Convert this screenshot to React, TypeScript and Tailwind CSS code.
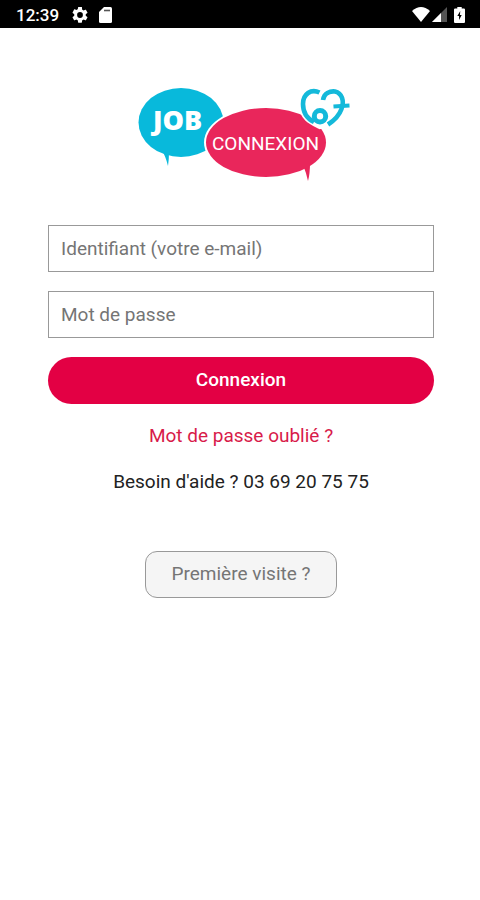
function StatusBar() {
  return (
    <header className="flex h-7 items-center justify-between bg-black pl-4 pr-[15px] text-white">
      <div className="flex items-center pt-[2px]">
        <span className="w-14 text-[17px] leading-7 font-medium">12:39</span>
        <svg viewBox="2 2 20 20" className="h-4 w-4" fill="currentColor" aria-hidden="true">
          <path d="M19.14 12.94c.04-.3.06-.61.06-.94 0-.32-.02-.64-.07-.94l2.03-1.58a.49.49 0 0 0 .12-.61l-1.92-3.32a.49.49 0 0 0-.59-.22l-2.39.96c-.5-.38-1.03-.7-1.62-.94l-.36-2.54A.48.48 0 0 0 13.92 2h-3.84a.47.47 0 0 0-.47.41l-.36 2.54c-.59.24-1.13.57-1.62.94l-2.39-.96a.47.47 0 0 0-.59.22L2.74 8.87a.47.47 0 0 0 .12.61l2.03 1.58c-.05.3-.09.63-.09.94s.02.64.07.94l-2.03 1.58a.49.49 0 0 0-.12.61l1.92 3.32c.12.22.37.29.59.22l2.39-.96c.5.38 1.03.7 1.62.94l.36 2.54c.05.24.24.41.48.41h3.84c.24 0 .44-.17.47-.41l.36-2.54c.59-.24 1.13-.56 1.62-.94l2.39.96c.22.08.47 0 .59-.22l1.92-3.32a.47.47 0 0 0-.12-.61zM12 15.6a3.6 3.6 0 1 1 0-7.2 3.6 3.6 0 0 1 0 7.2z" />
        </svg>
        <svg viewBox="0 0 13 16" className="ml-[11px] h-4 w-[13px]" aria-hidden="true">
          <path d="M5 0h6.500a1.500 1.500 0 0 1 1.500 1.500v13a1.500 1.500 0 0 1-1.500 1.500h-10A1.500 1.500 0 0 1 0 14.500V5z" fill="#fff" />
          <path d="M5 3.500h6" stroke="#555" strokeWidth="1.600" />
        </svg>
      </div>
      <div className="flex items-center pt-[1px]">
        <svg viewBox="0 0 18 15" className="h-[15px] w-[18px]" fill="#fff" aria-hidden="true">
          <path d="M0 4Q9-4 18 4L9 15z" />
        </svg>
        <svg viewBox="0 0 15 15" className="ml-[2px] h-[15px] w-[15px]" aria-hidden="true">
          <path d="M0 15 15 0v15z" fill="#555" />
          <path d="M0 15 9 6v9z" fill="#fff" />
        </svg>
        <svg viewBox="0 0 10 16" className="ml-[7px] h-4 w-[11px]" preserveAspectRatio="none" aria-hidden="true">
          <path d="M3 0h4v1.500h2a1 1 0 0 1 1 1V15a1 1 0 0 1-1 1H1a1 1 0 0 1-1-1V2.500a1 1 0 0 1 1-1h2z" fill="#fff" />
          <path d="M5.700 4 3 9h1.600v4L7 8H5.400z" fill="#000" />
        </svg>
      </div>
    </header>
  );
}

function Logo() {
  return (
    <svg viewBox="138 84 214 100" className="h-[100px] w-[214px]" role="img" aria-label="Job Connexion 67">
      <path d="M160 146Q166 157 168 166Q169 160 169 151z" fill="#08b9db" />
      <ellipse cx="181" cy="122.500" rx="42.500" ry="34.500" fill="#08b9db" />
      <ellipse cx="266" cy="142.500" rx="62" ry="36.500" fill="#fff" />
      <path d="M303 165Q306 172 308 181Q310 174 310 163z" fill="#e9265b" />
      <ellipse cx="266" cy="142.500" rx="60" ry="34.500" fill="#e9265b" />
      <path
        d="M323 94C313 86 302 94 302 105C302 118 312 122 320 126C337 122 346 113 346 101C344 89 331 88 323 94z"
        fill="#fff"
        stroke="#fff"
        strokeWidth="6"
      />
      <g fill="none" stroke="#14b9da" strokeWidth="4.600">
        <path d="M319.500 92.500C311 88.500 303 94 303 104C303 113 308 119 314 122" />
        <circle cx="320" cy="116.300" r="5.700" strokeWidth="5" />
        <path d="M323 100C324 93 330 91 335 91.500C342 93 344.500 101 341.500 109C339 116 335 120 328 124.500" />
        <path d="M333.500 106.500 349.500 105.500" strokeWidth="4" />
      </g>
      <text x="153" y="130" fill="#fff" fontSize="27" fontWeight="800" fontFamily="'Open Sans', sans-serif">
        JOB
      </text>
      <text x="212" y="150" fill="#fff" fontSize="19" fontFamily="Roboto, sans-serif">
        CONNEXION
      </text>
    </svg>
  );
}

function Field({ name, label, type }: { name: string; label: string; type: string }) {
  return (
    <input
      name={name}
      type={type}
      aria-label={label}
      placeholder={label}
      className="block h-[47px] w-full border border-[#999] bg-white px-3 text-[19px] text-[#333] outline-none placeholder:text-[#757575]"
    />
  );
}

export default function App() {
  return (
    <div className="min-h-screen bg-white font-['Roboto',sans-serif]">
      <StatusBar />
      <main className="flex flex-col pt-14 pr-[46px] pl-12">
        <div className="flex justify-center pl-2">
          <Logo />
        </div>
        <form className="mt-[41px] flex flex-col gap-[19px]" onSubmit={(e) => e.preventDefault()}>
          <Field name="email" label="Identifiant (votre e-mail)" type="email" />
          <Field name="password" label="Mot de passe" type="password" />
          <button type="submit" className="h-[47px] rounded-full bg-[#e30044] text-[19px] font-medium text-white">
            Connexion
          </button>
        </form>
        <div className="mt-[18px] flex flex-col items-center gap-[18px] text-[19px] leading-7">
          <a href="#oubli" className="text-[#d81b4a]">Mot de passe oublié ?</a>
          <p className="text-[#222]">Besoin d'aide ? 03 69 20 75 75</p>
        </div>
        <button
          type="button"
          className="mt-[55px] h-[47px] self-center rounded-xl border border-[#999] bg-[#f5f5f5] px-[26px] text-[19px] text-[#757575]"
        >
          Première visite ?
        </button>
      </main>
    </div>
  );
}
